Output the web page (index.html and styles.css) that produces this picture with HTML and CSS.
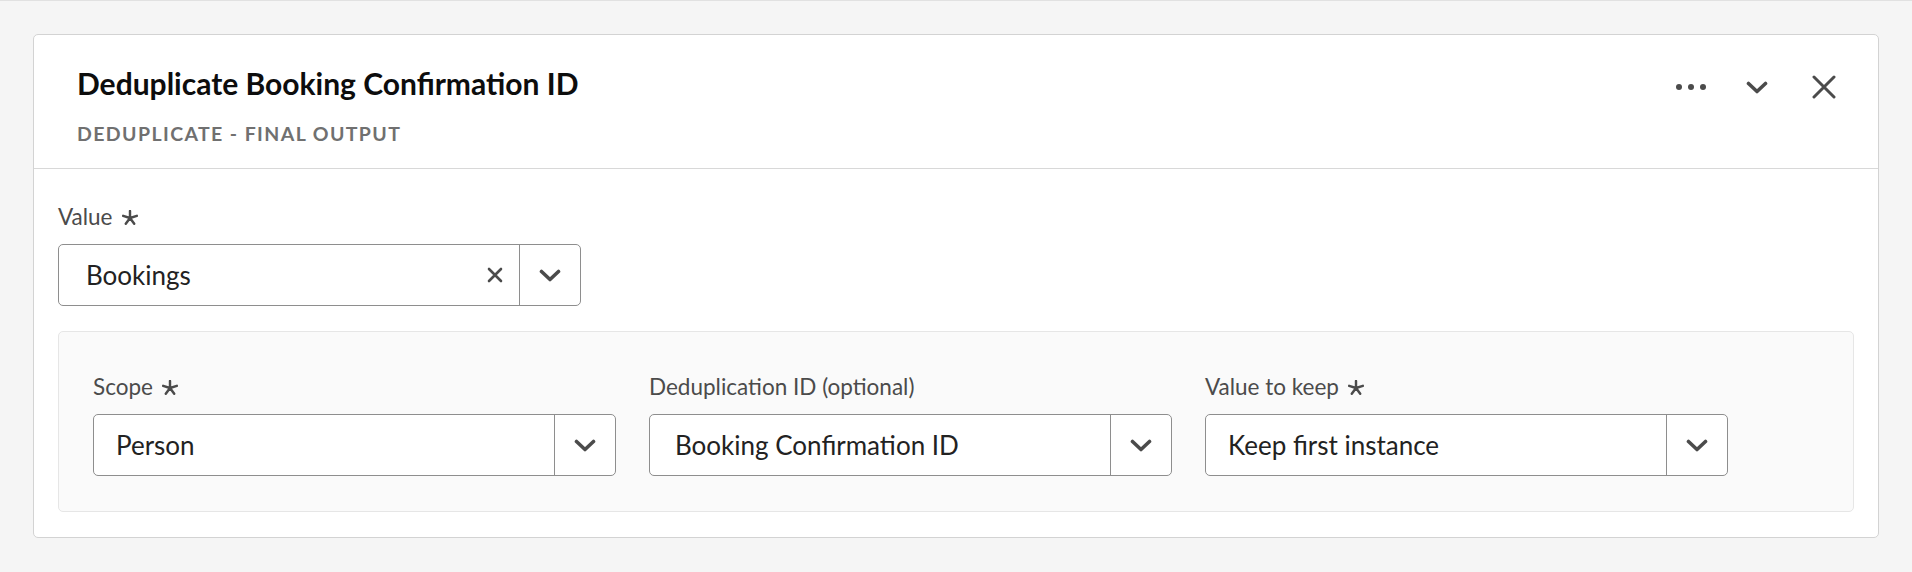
FILE: index.html
```html
<!DOCTYPE html>
<html lang="en">
<head>
<meta charset="utf-8">
<title>Deduplicate Booking Confirmation ID</title>
<link rel="stylesheet" href="styles.css">
</head>
<body>
<div class="page">
  <section class="card">
    <header class="card-header">
      <div class="heading">
        <h1 class="title">Deduplicate Booking Confirmation ID</h1>
        <div class="subtitle">DEDUPLICATE - FINAL OUTPUT</div>
      </div>
      <div class="actions">
        <button class="icon-btn" aria-label="More">
          <svg width="30" height="8" viewBox="0 0 30 8"><circle cx="3" cy="4" r="3"/><circle cx="15" cy="4" r="3"/><circle cx="27" cy="4" r="3"/></svg>
        </button>
        <button class="icon-btn" aria-label="Collapse">
          <svg width="22" height="13" viewBox="0 0 22 13"><path class="stroke" d="M2.5 2.5 L11 10.5 L19.5 2.5"/></svg>
        </button>
        <button class="icon-btn close-btn" aria-label="Close">
          <svg width="24" height="24" viewBox="0 0 24 24"><path class="stroke thin" d="M2 2 L22 22 M22 2 L2 22"/></svg>
        </button>
      </div>
    </header>
    <div class="card-body">
      <div class="field field-wide">
        <label class="label">Value <svg class="req" width="16" height="15" viewBox="0 0 17 16"><path d="M8.5 1 V8.5 M8.5 8.5 L15.8 6.2 M8.5 8.5 L13 14.7 M8.5 8.5 L4 14.7 M8.5 8.5 L1.2 6.2"/></svg></label>
        <div class="combo">
          <span class="combo-value combo-value-wide">Bookings</span>
          <span class="clear">
            <svg width="16" height="16" viewBox="0 0 16 16"><path class="stroke clear-x" d="M2 2 L14 14 M14 2 L2 14"/></svg>
          </span>
          <span class="combo-btn">
            <svg width="22" height="13" viewBox="0 0 22 13"><path class="stroke" d="M2.5 2.5 L11 10.5 L19.5 2.5"/></svg>
          </span>
        </div>
      </div>
      <div class="group">
        <div class="field">
          <label class="label">Scope <svg class="req" width="16" height="15" viewBox="0 0 17 16"><path d="M8.5 1 V8.5 M8.5 8.5 L15.8 6.2 M8.5 8.5 L13 14.7 M8.5 8.5 L4 14.7 M8.5 8.5 L1.2 6.2"/></svg></label>
          <div class="combo">
            <span class="combo-value">Person</span>
            <span class="combo-btn">
              <svg width="22" height="13" viewBox="0 0 22 13"><path class="stroke" d="M2.5 2.5 L11 10.5 L19.5 2.5"/></svg>
            </span>
          </div>
        </div>
        <div class="field">
          <label class="label">Deduplication ID (optional)</label>
          <div class="combo">
            <span class="combo-value combo-value-b">Booking Confirmation ID</span>
            <span class="combo-btn">
              <svg width="22" height="13" viewBox="0 0 22 13"><path class="stroke" d="M2.5 2.5 L11 10.5 L19.5 2.5"/></svg>
            </span>
          </div>
        </div>
        <div class="field">
          <label class="label">Value to keep <svg class="req" width="16" height="15" viewBox="0 0 17 16"><path d="M8.5 1 V8.5 M8.5 8.5 L15.8 6.2 M8.5 8.5 L13 14.7 M8.5 8.5 L4 14.7 M8.5 8.5 L1.2 6.2"/></svg></label>
          <div class="combo">
            <span class="combo-value">Keep first instance</span>
            <span class="combo-btn">
              <svg width="22" height="13" viewBox="0 0 22 13"><path class="stroke" d="M2.5 2.5 L11 10.5 L19.5 2.5"/></svg>
            </span>
          </div>
        </div>
      </div>
    </div>
  </section>
</div>
</body>
</html>
```

FILE: styles.css
```css
* { box-sizing: border-box; }

html, body {
  margin: 0;
  padding: 0;
  background: #f5f5f5;
  font-family: "Lato", "Noto Sans", sans-serif;
  color: #222222;
}

.page {
  border-top: 1px solid #e1e1e1;
  padding: 33px 33px 34px 33px;
}

.card {
  background: #ffffff;
  border: 1px solid #d3d3d3;
  border-radius: 5px;
}

.card-header {
  display: flex;
  justify-content: space-between;
  align-items: flex-start;
  height: 134px;
  padding: 31px 42px 0 43px;
  border-bottom: 1px solid #d8d8d8;
}

.title {
  margin: 0;
  font-size: 30px;
  line-height: 34px;
  font-weight: 700;
  color: #0d0d0d;
}

.subtitle {
  margin-top: 23px;
  font-size: 19.5px;
  line-height: 22px;
  font-weight: 700;
  letter-spacing: 1.4px;
  color: #707070;
}

.actions {
  display: flex;
  align-items: center;
  gap: 40px;
  margin-top: 9px;
}

.close-btn { margin-left: 4px; }

.icon-btn {
  border: 0;
  background: none;
  padding: 0;
  display: flex;
  align-items: center;
  justify-content: center;
  height: 24px;
  color: #4b4b4b;
}

.icon-btn svg { display: block; fill: #4b4b4b; }

.stroke {
  fill: none;
  stroke: #4b4b4b;
  stroke-width: 3.6;
  stroke-linecap: round;
  stroke-linejoin: round;
}

.stroke.thin { stroke-width: 3; }
.stroke.clear-x { stroke-width: 2.6; }

.card-body {
  padding: 36px 24px 25px 24px;
}

.field {
  display: flex;
  flex-direction: column;
  width: 523px;
}

.label {
  display: flex;
  align-items: center;
  gap: 9px;
  font-size: 22.5px;
  line-height: 24px;
  color: #4b4b4b;
  margin-bottom: 15px;
}

.req {
  display: block;
  fill: none;
  stroke: #4b4b4b;
  stroke-width: 2.6;
  stroke-linecap: round;
}

.combo {
  display: flex;
  align-items: stretch;
  height: 62px;
  border: 1px solid #8e8e8e;
  border-radius: 5px;
  background: #ffffff;
}

.combo-value {
  flex: 1;
  display: flex;
  align-items: center;
  padding-left: 22px;
  font-size: 26px;
  color: #222222;
  white-space: nowrap;
}

.combo-value-wide { padding-left: 27px; }
.combo-value-b { padding-left: 25px; }

.clear {
  display: flex;
  align-items: center;
  justify-content: center;
  width: 48px;
}

.clear svg { display: block; }

.combo-btn {
  display: flex;
  align-items: center;
  justify-content: center;
  width: 61px;
  border-left: 1px solid #8e8e8e;
}

.combo-btn svg { display: block; }

.group {
  margin-top: 25px;
  display: flex;
  gap: 33px;
  background: #fafafa;
  border: 1px solid #e6e6e6;
  border-radius: 5px;
  padding: 43px 34px 35px 34px;
}
```
